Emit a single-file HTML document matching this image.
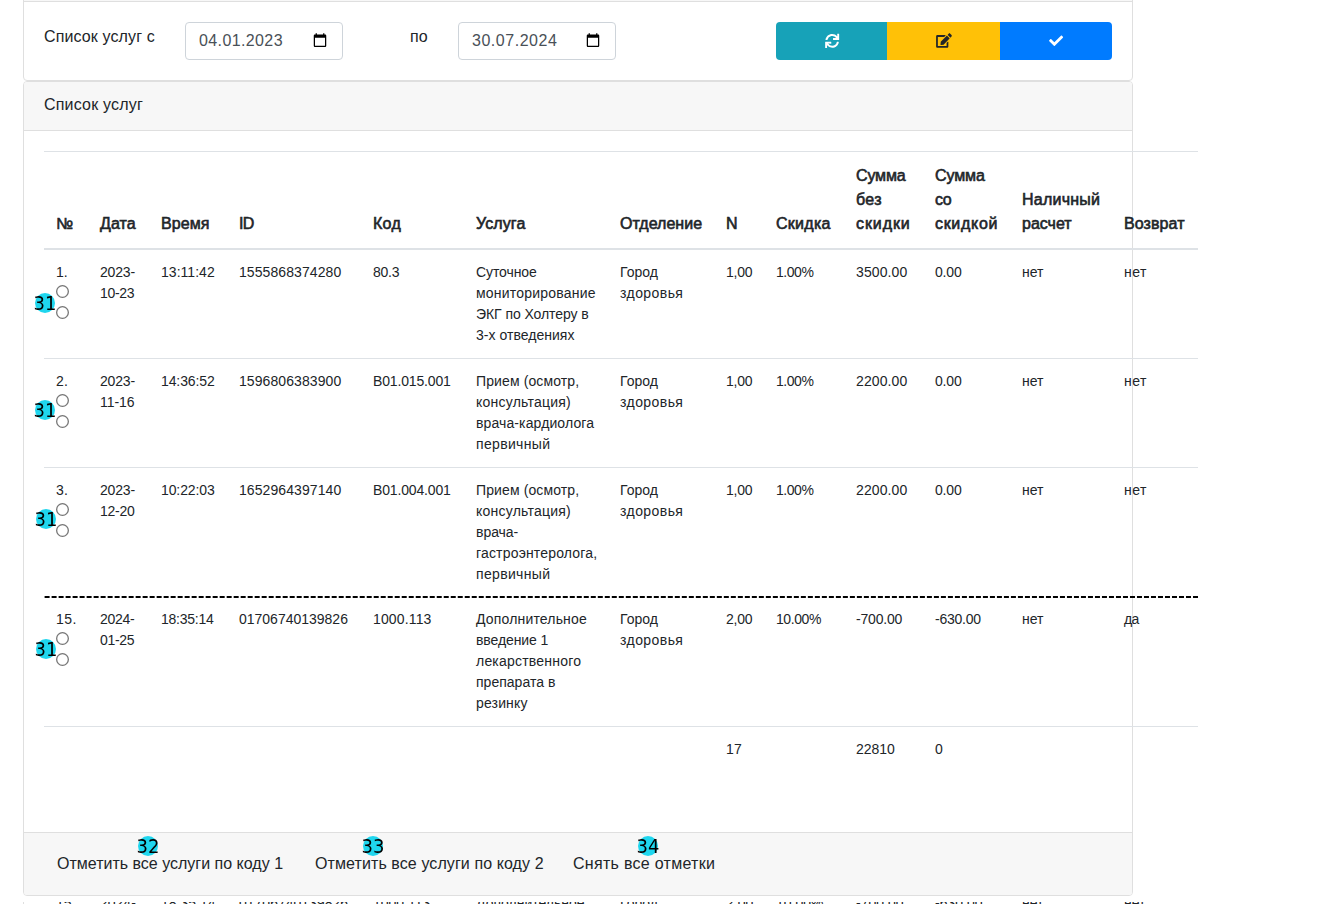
<!DOCTYPE html>
<html lang="ru">
<head>
<meta charset="utf-8">
<title>Список услуг</title>
<style>
html,body{margin:0;padding:0;background:#fff}
body{width:1334px;height:904px;position:relative;overflow:hidden;font-family:"Liberation Sans",sans-serif;font-size:16px;line-height:24px;color:#212529}
*{box-sizing:border-box}
#c1{position:absolute;left:23px;top:-40px;width:1110px;height:121px;border:1px solid #dfdfdf;border-radius:4px;background:#fff}
#c1h{position:absolute;left:0;top:0;width:1108px;height:41px;background:#f7f7f7;border-bottom:1px solid #dfdfdf}
.lbl{position:absolute;white-space:nowrap;font-size:16px;line-height:24px}
.date{position:absolute;top:22px;width:158px;height:38px;border:1px solid #ced4da;border-radius:4px;background:#fff;color:#495057}
.date .t{position:absolute;left:13px;top:6px;font-size:16px;line-height:24px;white-space:nowrap}
.date svg{position:absolute;left:126px;top:10px}
.btn3{position:absolute;top:22px;height:38px}
.btn3 svg{position:absolute;overflow:visible}
#c2{position:absolute;left:23px;top:81px;width:1110px;height:815px;border:1px solid #dfdfdf;border-radius:4px;background:#fff}
#c2h{position:absolute;left:0;top:0;width:1108px;height:49px;background:#f7f7f7;border-bottom:1px solid #dfdfdf;border-radius:3px 3px 0 0}
#c2f{position:absolute;left:0;top:750px;width:1108px;height:63px;background:#f7f7f7;border-top:1px solid #dfdfdf;border-radius:0 0 3px 3px}
table{position:absolute;left:44px;top:151px;width:1154px;border-collapse:separate;border-spacing:0;table-layout:fixed}
th,td{padding:12px;vertical-align:top;text-align:left;white-space:nowrap;overflow:visible}
th{font-size:16px;line-height:24px;font-weight:400;vertical-align:bottom;border-top:1px solid #dee2e6;border-bottom:2px solid #dee2e6;height:99px;-webkit-text-stroke:.6px #212529}
td{font-size:14px;line-height:21px;border-top:1px solid #dee2e6}
tr.first td,tr.dash td{border-top:0}
td.c0{position:relative}
.radio{position:absolute;left:12px;width:13px;height:13px;margin:0;padding:0}
.r1{top:35px}.r2{top:56px}
#dash{position:absolute;left:44px;top:596px}
.badge{position:absolute;width:20px;height:20px;border-radius:50%;background:#1fd6ee;will-change:transform}
.badge span{position:absolute;left:50%;top:calc(50% + .6px);transform:translate(-50%,-50%) scaleY(1.05);font:18px/1 "DejaVu Sans",sans-serif;color:#000;white-space:nowrap}
.fbtn{position:absolute;top:852px;font-size:16px;line-height:24px;white-space:nowrap}
#under{position:absolute;left:0;top:902px;width:1334px;height:2px;overflow:hidden}
#under .row{position:absolute;left:44px;top:0;font-size:14px;line-height:21px;white-space:nowrap}
#under .row span{position:absolute;top:-9px}
#under i{position:absolute;left:23px;top:0;width:1px;height:2px;background:#dfdfdf}
</style>
</head>
<body>
<div id="c1"><div id="c1h"></div></div>
<div class="lbl" style="left:44px;top:25px"><span id="l1" style="letter-spacing:0.122px">Список услуг с</span></div>
<div class="date" style="left:185px"><span class="t"><span id="d1" style="letter-spacing:0.384px">04.01.2023</span></span><svg width="16" height="15" viewBox="0 0 24 24" style="overflow:visible"><path transform="translate(0,-0.6)" fill="#000" d="M20 3h-1V1h-2v2H7V1H5v2H4c-1.1 0-2 .9-2 2v16c0 1.1.9 2 2 2h16c1.1 0 2-.9 2-2V5c0-1.1-.9-2-2-2zm0 18H4V8h16v13z"/></svg></div>
<div class="lbl" style="left:410px;top:25px"><span id="l2">по</span></div>
<div class="date" style="left:458px"><span class="t"><span id="d2" style="letter-spacing:0.524px">30.07.2024</span></span><svg width="16" height="15" viewBox="0 0 24 24" style="overflow:visible"><path transform="translate(0,-0.6)" fill="#000" d="M20 3h-1V1h-2v2H7V1H5v2H4c-1.1 0-2 .9-2 2v16c0 1.1.9 2 2 2h16c1.1 0 2-.9 2-2V5c0-1.1-.9-2-2-2zm0 18H4V8h16v13z"/></svg></div>
<div class="btn3" style="left:776px;width:111px;background:#17a2b8;border-radius:4px 0 0 4px"></div>
<div class="btn3" style="left:887px;width:113px;background:#ffc107"></div>
<div class="btn3" style="left:1000px;width:112px;background:#007bff;border-radius:0 4px 4px 0"></div>

<svg style="position:absolute;left:823px;top:31px;overflow:visible" width="24" height="22"><path transform="translate(2.150,2.700) scale(0.027344,0.027930)" fill="#fff" d="M440.65 12.57l4 82.77A247.16 247.16 0 0 0 255.83 8C134.73 8 33.91 94.92 12.29 209.82A12 12 0 0 0 24.09 224h49.05a12 12 0 0 0 11.67-9.26 175.91 175.91 0 0 1 317-56.94l-101.46-4.86a12 12 0 0 0-12.57 12v47.41a12 12 0 0 0 12 12H500a12 12 0 0 0 12-12V12a12 12 0 0 0-12-12h-47.37a12 12 0 0 0-11.98 12.57zM255.83 432a175.61 175.61 0 0 1-146-77.8l101.8 4.87a12 12 0 0 0 12.57-12v-47.4a12 12 0 0 0-12-12H12a12 12 0 0 0-12 12V500a12 12 0 0 0 12 12h47.35a12 12 0 0 0 12-12.6l-4.15-82.57A247.17 247.17 0 0 0 255.83 504c121.11 0 221.93-86.92 243.55-201.82a12 12 0 0 0-11.8-14.18h-49.05a12 12 0 0 0-11.67 9.26A175.86 175.86 0 0 1 255.83 432z"/></svg>
<svg style="position:absolute;left:934px;top:31px;overflow:visible" width="24" height="22"><path transform="translate(2.100,2.300) scale(0.027344,0.028320)" fill="#212529" d="M402.6 83.2l90.2 90.2c3.8 3.8 3.8 10 0 13.8L274.4 405.6l-92.8 10.3c-12.4 1.4-22.9-9.1-21.5-21.5l10.3-92.8L388.8 83.2c3.8-3.8 10-3.8 13.8 0zm162-22.9l-48.8-48.8c-15.2-15.2-39.9-15.2-55.2 0l-35.4 35.4c-3.8 3.8-3.8 10 0 13.8l90.2 90.2c3.8 3.8 10 3.8 13.8 0l35.4-35.4c15.2-15.3 15.2-40 0-55.2zM384 346.2V448H64V128h229.8c3.200 0 6.200-1.300 8.500-3.500l40-40c7.600-7.600 2.200-20.500-8.500-20.500H48C21.500 64 0 85.500 0 112v352c0 26.500 21.500 48 48 48h352c26.500 0 48-21.500 48-48V306.200c0-10.700-12.900-16-20.500-8.500l-40 40c-2.200 2.300-3.500 5.300-3.500 8.500z"/></svg>
<svg style="position:absolute;left:1047px;top:31px;overflow:visible" width="24" height="22"><path transform="translate(2.100,2.750) scale(0.027344,0.027344)" fill="#fff" d="M173.898 439.404l-166.4-166.4c-9.997-9.997-9.997-26.206 0-36.204l36.203-36.204c9.997-9.998 26.207-9.998 36.204 0L192 312.69 432.095 72.596c9.997-9.997 26.207-9.997 36.204 0l36.203 36.204c9.997 9.997 9.997 26.206 0 36.204l-294.4 294.401c-9.998 9.997-26.207 9.997-36.204-.001z"/></svg>
<div id="under"><div class="row"><span style="left:12px">15.</span><span style="left:56px">2024-</span><span style="left:117px">18:35:14</span><span style="left:195px">01706740139826</span><span style="left:329px">1000.113</span><span style="left:432px">Дополнительное</span><span style="left:576px">Город</span><span style="left:682px">2,00</span><span style="left:732px">10.00%</span><span style="left:812px">-700.00</span><span style="left:891px">-630.00</span><span style="left:978px">нет</span><span style="left:1080px">нет</span></div><i></i></div>
<div id="c2"><div id="c2h"></div><div id="c2f"></div></div>
<div class="lbl" style="left:44px;top:93px"><span id="l3" style="letter-spacing:0.194px">Список услуг</span></div>

<table><colgroup><col style="width:44px"><col style="width:61px"><col style="width:78px"><col style="width:134px"><col style="width:103px"><col style="width:144px"><col style="width:106px"><col style="width:50px"><col style="width:80px"><col style="width:79px"><col style="width:87px"><col style="width:102px"><col style="width:86px"></colgroup>
<thead><tr><th><span id="L1">№</span></th><th><span id="L2" style="letter-spacing:0.075px">Дата</span></th><th><span id="L3" style="letter-spacing:0.074px">Время</span></th><th><span id="L4" style="letter-spacing:-0.600px">ID</span></th><th><span id="L5" style="letter-spacing:0.304px">Код</span></th><th><span id="L6" style="letter-spacing:0.099px">Услуга</span></th><th><span id="L7" style="letter-spacing:0.026px">Отделение</span></th><th><span id="L8">N</span></th><th><span id="L9" style="letter-spacing:0.276px">Скидка</span></th><th><span id="L10" style="letter-spacing:-0.166px">Сумма</span><br><span id="L11" style="letter-spacing:0.316px">без</span><br><span id="L12" style="letter-spacing:0.912px">скидки</span></th><th><span id="L13" style="letter-spacing:-0.122px">Сумма</span><br><span id="L14" style="letter-spacing:-0.479px">со</span><br><span id="L15" style="letter-spacing:0.687px">скидкой</span></th><th><span id="L16" style="letter-spacing:0.245px">Наличный</span><br><span id="L17">расчет</span></th><th><span id="L18" style="letter-spacing:0.099px">Возврат</span></th></tr></thead>
<tbody>
<tr class="first"><td class="c0"><span id="L19" style="letter-spacing:0.056px">1.</span><svg class="radio r1" width="13" height="13"><circle cx="6.5" cy="6.5" r="5.85" fill="#fff" stroke="#767676" stroke-width="1.3"/></svg><svg class="radio r2" width="13" height="13"><circle cx="6.5" cy="6.5" r="5.85" fill="#fff" stroke="#767676" stroke-width="1.3"/></svg></td><td><span id="L20" style="letter-spacing:-0.169px">2023-</span><br><span id="L21" style="letter-spacing:-0.292px">10-23</span></td><td><span id="L22" style="letter-spacing:0.037px">13:11:42</span></td><td><span id="L23" style="letter-spacing:0.083px">1555868374280</span></td><td><span id="L24" style="letter-spacing:-0.234px">80.3</span></td><td><span id="L25" style="letter-spacing:-0.084px">Суточное</span><br><span id="L26" style="letter-spacing:0.214px">мониторирование</span><br><span id="L27" style="letter-spacing:-0.072px">ЭКГ по Холтеру в</span><br><span id="L28" style="letter-spacing:0.031px">3-х отведениях</span></td><td><span id="L29" style="letter-spacing:0.003px">Город</span><br><span id="L30" style="letter-spacing:0.429px">здоровья</span></td><td><span id="L31" style="letter-spacing:-0.236px">1,00</span></td><td><span id="L32" style="letter-spacing:-0.465px">1.00%</span></td><td><span id="L33" style="letter-spacing:0.116px">3500.00</span></td><td><span id="L34" style="letter-spacing:-0.179px">0.00</span></td><td><span id="L35" style="letter-spacing:-0.042px">нет</span></td><td><span id="L36" style="letter-spacing:0.450px">нет</span></td></tr>
<tr class=""><td class="c0"><span id="L37" style="letter-spacing:0.328px">2.</span><svg class="radio r1" width="13" height="13"><circle cx="6.5" cy="6.5" r="5.85" fill="#fff" stroke="#767676" stroke-width="1.3"/></svg><svg class="radio r2" width="13" height="13"><circle cx="6.5" cy="6.5" r="5.85" fill="#fff" stroke="#767676" stroke-width="1.3"/></svg></td><td><span id="L38" style="letter-spacing:-0.169px">2023-</span><br><span id="L39" style="letter-spacing:-0.066px">11-16</span></td><td><span id="L40" style="letter-spacing:-0.106px">14:36:52</span></td><td><span id="L41" style="letter-spacing:0.083px">1596806383900</span></td><td><span id="L42" style="letter-spacing:-0.156px">B01.015.001</span></td><td><span id="L43" style="letter-spacing:0.117px">Прием (осмотр,</span><br><span id="L44" style="letter-spacing:0.232px">консультация)</span><br><span id="L45" style="letter-spacing:0.112px">врача-кардиолога</span><br><span id="L46" style="letter-spacing:0.339px">первичный</span></td><td><span id="L47" style="letter-spacing:0.003px">Город</span><br><span id="L48" style="letter-spacing:0.429px">здоровья</span></td><td><span id="L49" style="letter-spacing:-0.236px">1,00</span></td><td><span id="L50" style="letter-spacing:-0.465px">1.00%</span></td><td><span id="L51" style="letter-spacing:0.116px">2200.00</span></td><td><span id="L52" style="letter-spacing:-0.179px">0.00</span></td><td><span id="L53" style="letter-spacing:-0.042px">нет</span></td><td><span id="L54" style="letter-spacing:0.450px">нет</span></td></tr>
<tr class=""><td class="c0"><span id="L55" style="letter-spacing:0.328px">3.</span><svg class="radio r1" width="13" height="13"><circle cx="6.5" cy="6.5" r="5.85" fill="#fff" stroke="#767676" stroke-width="1.3"/></svg><svg class="radio r2" width="13" height="13"><circle cx="6.5" cy="6.5" r="5.85" fill="#fff" stroke="#767676" stroke-width="1.3"/></svg></td><td><span id="L56" style="letter-spacing:-0.169px">2023-</span><br><span id="L57" style="letter-spacing:-0.259px">12-20</span></td><td><span id="L58" style="letter-spacing:-0.111px">10:22:03</span></td><td><span id="L59" style="letter-spacing:0.083px">1652964397140</span></td><td><span id="L60" style="letter-spacing:-0.156px">B01.004.001</span></td><td><span id="L61" style="letter-spacing:0.117px">Прием (осмотр,</span><br><span id="L62" style="letter-spacing:0.232px">консультация)</span><br><span id="L63" style="letter-spacing:-0.046px">врача-</span><br><span id="L64" style="letter-spacing:0.176px">гастроэнтеролога,</span><br><span id="L65" style="letter-spacing:0.339px">первичный</span></td><td><span id="L66" style="letter-spacing:0.003px">Город</span><br><span id="L67" style="letter-spacing:0.429px">здоровья</span></td><td><span id="L68" style="letter-spacing:-0.236px">1,00</span></td><td><span id="L69" style="letter-spacing:-0.465px">1.00%</span></td><td><span id="L70" style="letter-spacing:0.116px">2200.00</span></td><td><span id="L71" style="letter-spacing:-0.179px">0.00</span></td><td><span id="L72" style="letter-spacing:-0.042px">нет</span></td><td><span id="L73" style="letter-spacing:0.450px">нет</span></td></tr>
<tr class="dash"><td class="c0"><span id="L74" style="letter-spacing:0.418px">15.</span><svg class="radio r1" width="13" height="13"><circle cx="6.5" cy="6.5" r="5.85" fill="#fff" stroke="#767676" stroke-width="1.3"/></svg><svg class="radio r2" width="13" height="13"><circle cx="6.5" cy="6.5" r="5.85" fill="#fff" stroke="#767676" stroke-width="1.3"/></svg></td><td><span id="L75" style="letter-spacing:-0.263px">2024-</span><br><span id="L76" style="letter-spacing:-0.301px">01-25</span></td><td><span id="L77" style="letter-spacing:-0.248px">18:35:14</span></td><td><span id="L78" style="letter-spacing:-0.007px">01706740139826</span></td><td><span id="L79" style="letter-spacing:0.143px">1000.113</span></td><td><span id="L80" style="letter-spacing:0.168px">Дополнительное</span><br><span id="L81" style="letter-spacing:-0.099px">введение 1</span><br><span id="L82" style="letter-spacing:0.208px">лекарственного</span><br><span id="L83" style="letter-spacing:0.020px">препарата в</span><br><span id="L84" style="letter-spacing:0.151px">резинку</span></td><td><span id="L85" style="letter-spacing:0.003px">Город</span><br><span id="L86" style="letter-spacing:0.429px">здоровья</span></td><td><span id="L87" style="letter-spacing:-0.236px">2,00</span></td><td><span id="L88" style="letter-spacing:-0.430px">10.00%</span></td><td><span id="L89" style="letter-spacing:-0.179px">-700.00</span></td><td><span id="L90" style="letter-spacing:-0.248px">-630.00</span></td><td><span id="L91" style="letter-spacing:-0.042px">нет</span></td><td><span id="L92" style="letter-spacing:-0.600px">да</span></td></tr>
<tr class="tot"><td></td><td></td><td></td><td></td><td></td><td></td><td></td><td><span id="L93" style="letter-spacing:0.150px">17</span></td><td></td><td><span id="L94" style="letter-spacing:-0.026px">22810</span></td><td><span id="L95">0</span></td><td></td><td></td></tr>
</tbody></table>
<svg id="dash" width="1154" height="2"><line x1="0.6" y1="1" x2="1154" y2="1" stroke="#000" stroke-width="2" stroke-dasharray="5 2.0024"/></svg>
<div class="badge" style="left:35px;top:293px"><span>31</span></div>
<div class="badge" style="left:35px;top:400px"><span>31</span></div>
<div class="badge" style="left:36px;top:509px"><span>31</span></div>
<div class="badge" style="left:36px;top:639px"><span>31</span></div>

<div class="fbtn" style="left:57px"><span id="f1" style="letter-spacing:0.002px">Отметить все услуги по коду 1</span></div>
<div class="fbtn" style="left:315px"><span id="f2" style="letter-spacing:0.092px">Отметить все услуги по коду 2</span></div>
<div class="fbtn" style="left:573px"><span id="f3" style="letter-spacing:0.289px">Снять все отметки</span></div>
<div class="badge" style="left:138px;top:836px"><span>32</span></div>
<div class="badge" style="left:363px;top:836px"><span>33</span></div>
<div class="badge" style="left:638px;top:836px"><span>34</span></div>
</body>
</html>
